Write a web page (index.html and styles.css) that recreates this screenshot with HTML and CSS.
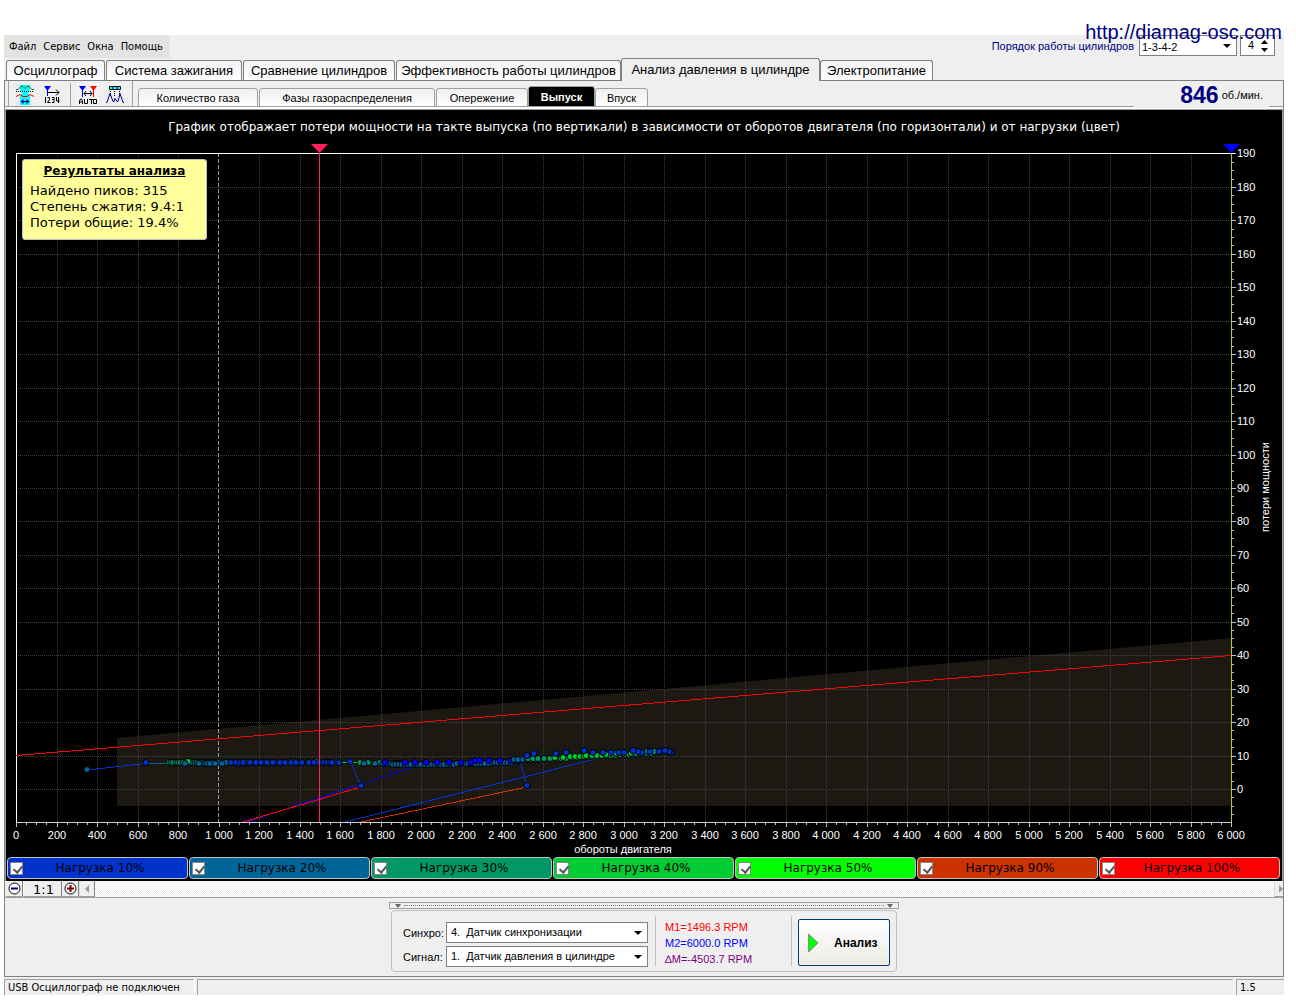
FILE: index.html
```
<!DOCTYPE html>
<html lang="ru">
<head>
<meta charset="utf-8">
<title>USB Осциллограф</title>
<link rel="stylesheet" href="styles.css">
</head>
<body>
<a class="site" href="http://diamag-osc.com">http://diamag-osc.com</a>
<div class="window">
  <header class="top">
    <nav class="menu">
      <button type="button">Файл</button><button type="button">Сервис</button><button type="button">Окна</button><button type="button">Помощь</button>
    </nav>
    <div class="order">
      <label for="order">Порядок работы цилиндров</label>
      <span class="combo combo-order"><select id="order"><option>1-3-4-2</option></select></span>
      <span class="spin"><input type="number" value="4" aria-label="Количество цилиндров"><svg width="9" height="14" viewBox="0 0 9 14"><path d="M1 5L4.500 1L8 5ZM1 9H8L4.500 13Z"/></svg></span>
    </div>
  </header>

  <nav class="tabs">
    <button type="button">Осциллограф</button>
    <button type="button">Система зажигания</button>
    <button type="button">Сравнение цилиндров</button>
    <button type="button">Эффективность работы цилиндров</button>
    <button type="button" class="active">Анализ давления в цилиндре</button>
    <button type="button">Электропитание</button>
  </nav>

  <main class="page">
    <div class="toolbar">
      <div class="tools">
        <button type="button" aria-label="Диапазон">
          <svg width="20" height="20" viewBox="0 0 20 20"><path fill="#0ff" d="M5 0h10v5l-2 3 2 3v9H5v-9l2-3-2-3z"/><path fill="none" stroke="#008000" d="M1 4.500h2l3-3h2l2 2 2-2h2l3 3h2"/><path stroke="#000" stroke-dasharray="1 1" d="M1 6.500h18"/><path fill="none" stroke="#f00" d="M1 11.500l4-2 3 2h4l3-2 4 2"/><path stroke="#000080" d="M6 16.500h8"/><path fill="#000080" d="M5.500 16.500l3-2.500v5zM14.500 16.500l-3-2.500v5z"/></svg>
        </button>
        <button type="button" aria-label="Нумерация">
          <svg width="18" height="20" viewBox="0 0 18 20"><path fill="#00f" d="M1 1h7L4.500 6z"/><path stroke="#00f" d="M4.500 2v9"/><path fill="none" stroke="#000" d="M5 7.500h11M13 4.500l3 3-3 3"/><path fill="none" stroke="#000" d="M2.500 12v6M4.500 12.500h2v2l-2 3h3M9 12.500h2v5H9M9 14.500h2M13.500 12v4h3M15.500 12v6"/></svg>
        </button>
        <i class="sep"></i>
        <button type="button" class="pressed" aria-label="Авто">
          <svg width="20" height="20" viewBox="0 0 20 20"><path fill="#00f" d="M1 1h7L4.500 6z"/><path stroke="#00f" d="M4.500 2v10"/><path fill="#f00" d="M12 1h7l-3.500 5z"/><path stroke="#f00" d="M15.500 2v10"/><path fill="none" stroke="#000" d="M6 8.500h8M8 6l-2 2.500L8 11M12 6l2 2.500-2 2.500M1.500 19v-3l1-2h1l1 2v3M1.500 17h3M6.500 14v4.500h3V14M11 14.500h4M13.500 14v5M15.500 14.500h3v4h-3z"/></svg>
        </button>
        <button type="button" aria-label="Такты">
          <svg width="20" height="20" viewBox="0 0 20 20"><path fill="#0ff" stroke="#000" d="M4.500 1.500h11v3h-11zM8 1v4M12 1v4"/><path stroke="#000" stroke-dasharray="1 1" d="M5.500 6v6M9.500 6v6M14.500 6v6"/><path fill="none" stroke="#000080" d="M1 17.500h1l3-9 3 8h1l1-3 2 3h1l2-8 3 9h1"/></svg>
        </button>
      </div>
      <nav class="subtabs">
        <button type="button">Количество газа</button>
        <button type="button" class="wide">Фазы газораспределения</button>
        <button type="button">Опережение</button>
        <button type="button" class="active">Выпуск</button>
        <button type="button" class="short">Впуск</button>
      </nav>
      <div class="rpm"><b>846</b><span>об./мин.</span></div>
    </div>

    <section class="scope">
      <h1>График отображает потери мощности на такте выпуска (по вертикали) в зависимости от оборотов двигателя (по горизонтали) и от нагрузки (цвет)</h1>
      <div class="plot">
        <svg id="chart" class="chart" viewBox="6 143 1276 713"></svg>
        <aside class="results">
          <h2>Результаты анализа</h2>
          <p>Найдено пиков: 315</p>
          <p>Степень сжатия: 9.4:1</p>
          <p>Потери общие: 19.4%</p>
        </aside>
      </div>
      <div class="legend">
        <label class="l10"><input type="checkbox" checked><span>Нагрузка 10%</span></label>
        <label class="l20"><input type="checkbox" checked><span>Нагрузка 20%</span></label>
        <label class="l30"><input type="checkbox" checked><span>Нагрузка 30%</span></label>
        <label class="l40"><input type="checkbox" checked><span>Нагрузка 40%</span></label>
        <label class="l50"><input type="checkbox" checked><span>Нагрузка 50%</span></label>
        <label class="l90"><input type="checkbox" checked><span>Нагрузка 90%</span></label>
        <label class="l100"><input type="checkbox" checked><span>Нагрузка 100%</span></label>
      </div>
    </section>

    <div class="scroll">
      <button type="button" class="zoom" aria-label="Уменьшить"><svg width="13" height="13" viewBox="0 0 13 13"><circle cx="6.500" cy="6.500" r="5.500" fill="#fff" stroke="#000"/><path stroke="#000080" stroke-width="2" d="M3 6.500h7"/></svg></button>
      <button type="button" class="ratio">1:1</button>
      <button type="button" class="zoom" aria-label="Увеличить"><svg width="13" height="13" viewBox="0 0 13 13"><circle cx="6.500" cy="6.500" r="5.500" fill="#fff" stroke="#000"/><path stroke="#800000" stroke-width="2" d="M3 6.500h7M6.500 3v7"/></svg></button>
      <button type="button" class="arrow" aria-label="Влево"><svg width="4" height="8" viewBox="0 0 4 8"><path fill="#999" d="M4 0v8L0 4z"/></svg></button>
      <div class="track"></div>
      <button type="button" class="arrow end" aria-label="Вправо"><svg width="4" height="8" viewBox="0 0 4 8"><path fill="#999" d="M0 0v8l4-4z"/></svg></button>
    </div>

    <section class="dock">
      <div class="splitter">
        <svg width="6" height="4" viewBox="0 0 6 4"><path fill="#666" d="M0 0h6L3 4z"/></svg><i></i><svg width="6" height="4" viewBox="0 0 6 4"><path fill="#666" d="M0 0h6L3 4z"/></svg>
      </div>
      <form class="controls">
        <div class="fields">
          <label for="sync">Синхро:</label>
          <span class="combo"><select id="sync"><option>4.&nbsp; Датчик синхронизации</option></select></span>
          <label for="signal">Сигнал:</label>
          <span class="combo"><select id="signal"><option>1.&nbsp; Датчик давления в цилиндре</option></select></span>
        </div>
        <div class="markers">
          <p class="m1">M1=1496.3 RPM</p>
          <p class="m2">M2=6000.0 RPM</p>
          <p class="md">∆M=-4503.7 RPM</p>
        </div>
        <button type="button" class="analyze"><svg width="11" height="20" viewBox="0 0 11 20"><path fill="#0f0" stroke="#888" d="M.5 1v18L10 10z"/></svg><span>Анализ</span></button>
      </form>
    </section>
  </main>

  <footer class="status">
    <span class="state">USB Осциллограф не подключен</span><span class="blank"></span><span class="version">1.5</span>
  </footer>
</div>
<script src="chart.js"></script>
</body>
</html>
```
FILE: styles.css
```
* { box-sizing: border-box; }
body {
  margin: 0;
  padding: 35px 12px 4px 4px;
  background: #fff;
  color: #000;
  font: 11px/14px "Liberation Sans", Arial, sans-serif;
}
button, select, input { font: inherit; color: inherit; margin: 0; padding: 0; border: 0; background: none; }
h1, h2, p { margin: 0; }
svg { display: block; flex: none; }
.site {
  position: absolute;
  top: 20px;
  right: 14px;
  z-index: 2;
  color: #000080;
  font-size: 20px;
  line-height: 24px;
  text-decoration: none;
}
.window { background: #efefef; }

.top { display: flex; justify-content: space-between; height: 23px; }
.menu {
  display: flex;
  gap: 7px;
  padding: 0 7px 0 5px;
  background: #e3e3e3;
  font-family: "DejaVu Sans Condensed", "DejaVu Sans", sans-serif;
}
.order { display: flex; padding-right: 9px; color: #000080; line-height: 22px; }
.order label { margin-right: 5px; }
.combo { position: relative; display: block; height: 21px; border: 1px solid #808080; background: #fff; color: #000; }
.combo::after {
  content: "";
  position: absolute;
  top: 8px;
  right: 5px;
  border: 4px solid transparent;
  border-top-color: #000;
  border-bottom: 0;
}
.combo select { display: block; width: 100%; height: 100%; padding-left: 4px; appearance: none; outline: 0; }
.combo-order { width: 98px; margin-right: 3px; }
.combo-order select { padding-left: 2px; padding-bottom: 3px; }
.spin { display: flex; align-items: center; width: 35px; height: 21px; border: 1px solid #808080; background: #fff; color: #000; }
.spin input { width: 19px; padding: 0 0 2px 7px; appearance: textfield; }
.spin input::-webkit-inner-spin-button { display: none; }

.tabs { display: flex; align-items: flex-end; height: 22px; padding-left: 2px; gap: 1px; }
.tabs button {
  width: 113px;
  height: 20px;
  border: 1px solid #808080;
  border-bottom: 0;
  border-radius: 3px 3px 0 0;
  background: linear-gradient(#f2f2f2, #fff);
  font-size: 13px;
  white-space: nowrap;
}
.tabs button:nth-child(1) { width: 99px; }
.tabs button:nth-child(2) { width: 136px; }
.tabs button:nth-child(3) { width: 152px; }
.tabs button:nth-child(4) { width: 225px; }
.tabs .active { position: relative; width: 199px; height: 23px; margin: 0 -1px -1px; background: #efefef; }

.page { border: 1px solid #808080; }
.toolbar { display: flex; height: 29px; padding-left: 3px; border-bottom: 1px solid #a0a0a0; box-shadow: inset 0 -2px #fff, inset 0 -3px #999; }
.tools { display: flex; align-items: center; height: 25px; padding: 2px 6px 0 4px; border-left: 1px solid #a0a0a0; border-right: 1px solid #a0a0a0; gap: 4px; width: 125px; }
.tools button { display: flex; align-items: center; justify-content: center; width: 23px; height: 23px; }
.tools .pressed { background: #fff repeating-conic-gradient(#e8e8e8 0 25%, #fff 0 50%) 0 0 / 2px 2px; }
.sep { width: 1px; height: 23px; margin: 0 1px 0 3px; background: #a0a0a0; }
.subtabs { display: flex; align-items: flex-end; height: 26px; margin-left: 5px; gap: 1px; }
.subtabs button {
  width: 92px;
  height: 19px;
  border: 1px solid #a0a0a0;
  border-radius: 3px 3px 0 0;
  background: linear-gradient(#efefef, #fff);
  white-space: nowrap;
}
.subtabs button:first-child { width: 120px; }
.subtabs .wide { width: 176px; }
.subtabs .short { width: 53px; margin-left: -1px; }
.subtabs .active { width: 67px; height: 21px; margin-left: -1px; background: #000; color: #fff; font-weight: bold; }
.rpm { display: flex; align-items: center; height: 27px; margin-left: auto; margin-right: 14px; padding: 0 6px 0 46px; background: #efefef; gap: 3px; }
.rpm b { color: #000080; font-size: 23px; }

.scope { padding: 1px 0 2px; border: solid #a0a0a0; border-width: 0 1px; background: #000; font-family: "DejaVu Sans", Verdana, sans-serif; }
.scope h1 { height: 32px; padding-top: 8px; color: #fff; font-size: 12px; font-weight: normal; line-height: 16px; text-align: center; }
.plot { position: relative; }
.chart { width: 100%; height: auto; }
.chart text { fill: #fff; font: 11px "Liberation Sans", Arial, sans-serif; }
.results {
  position: absolute;
  top: 16px;
  left: 16px;
  width: 185px;
  height: 81px;
  padding: 3px 7px;
  border: 1px solid #c0c0c0;
  border-radius: 3px;
  background: #ff9;
  font-size: 13px;
  line-height: 16px;
  white-space: nowrap;
}
.results h2 { margin-bottom: 4px; font-size: 12px; line-height: 16px; text-align: center; text-decoration: underline; }
.legend { display: grid; grid-template-columns: repeat(7, 1fr); padding: 1px 2px 0 1px; gap: 1px; }
.legend label {
  display: flex;
  align-items: center;
  height: 22px;
  padding: 0 10px 0 2px;
  border: 1px solid #c0c0c0;
  border-radius: 4px;
  font-size: 12px;
}
.legend span { flex: 1; text-align: center; white-space: nowrap; }
.legend input { position: relative; width: 13px; height: 13px; border: 1px solid #888; background: #fff; appearance: none; }
.legend input:checked::after {
  content: "";
  position: absolute;
  top: 1px;
  left: 4px;
  width: 4px;
  height: 7px;
  border: solid #555;
  border-width: 0 2px 2px 0;
  transform: rotate(40deg);
}
.l10 { background: #0033cc; }
.l20 { background: #006699; }
.l30 { background: #009966; }
.l40 { background: #00cc33; }
.l50 { background: #00ff00; }
.l90 { background: #cc3300; }
.l100 { background: #ff0000; }

.scroll { display: flex; height: 17px; padding-left: 1px; border-bottom: 1px solid #a0a0a0; background: #efefef; }
.scroll button { display: flex; align-items: center; justify-content: center; border-right: 1px solid #808080; border-bottom: 1px solid #a0a0a0; }
.scroll .zoom { width: 17px; }
.scroll .ratio { width: 39px; padding: 2px 0 0 2px; border-left: 1px solid #fff; font: 13px "DejaVu Sans", sans-serif; }
.scroll .arrow { width: 16px; border-left: 1px solid #ddd; }
.scroll .end { width: 9px; padding-left: 4px; border-right: 0; }
.track { flex: 1; background: #fff repeating-conic-gradient(#ececec 0 25%, #fff 0 50%) 0 0 / 2px 2px; }

.dock { display: flex; flex-direction: column; align-items: center; padding: 4px 0; }
.splitter { display: flex; align-items: center; width: 510px; height: 7px; padding: 0 5px; border: 1px solid #a0a0a0; gap: 3px; }
.splitter i { flex: 1; border-top: 1px dotted #808080; }
.controls { display: flex; width: 506px; height: 62px; margin-top: 1px; padding: 8px 5px 5px 11px; border: 1px solid #c0c0c0; border-radius: 4px; }
.fields { display: grid; grid-template-columns: 43px 202px; grid-auto-rows: 21px; row-gap: 3px; align-items: center; padding-top: 3px; }
.combo select { padding-bottom: 1px; }
.markers { width: 137px; height: 50px; margin: -3px 6px 0 7px; padding: 3px 9px 0; border: solid #c0c0c0; border-width: 0 1px; line-height: 16px; white-space: nowrap; }
.m1 { color: #f00; }
.m2 { color: #00f; }
.md { color: #800080; }
.controls .analyze {
  display: flex;
  align-items: center;
  width: 92px;
  height: 47px;
  padding-left: 9px;
  border: 1px solid #003c74;
  border-radius: 2px;
  background: linear-gradient(#fff, #ecebe5);
  font-weight: bold;
  font-size: 12px;
  gap: 15px;
}

.status { display: flex; height: 18px; padding-top: 2px; font-family: "DejaVu Sans Condensed", "DejaVu Sans", sans-serif; gap: 3px; }
.status span { padding: 1px 3px; border: solid #a0a0a0; border-width: 1px 0 0 1px; box-shadow: 1px 0 #fff; white-space: nowrap; }
.state { width: 190px; }
.blank { flex: 1; }
.version { width: 48px; }
```
FILE: chart.js
```
const X0 = 16, X1 = 1231, YT = 153, YB = 822, Y_ZERO = 789;
const px = rpm => Math.round(X0 + rpm * 0.2025);
const py = loss => Math.round(Y_ZERO - loss * 3.345);
const load = { b: '#0033cc', t: '#006699', g: '#009966', G: '#00cc33', B: '#0000ff' };
const out = [];
const line = (x1, y1, x2, y2, color, extra = '') =>
  out.push(`<path d="M${x1} ${y1}L${x2} ${y2}" fill="none" stroke="${color}" shape-rendering="crispEdges" ${extra}/>`);

// Tolerance zone
out.push('<path fill="#1c1913" d="M117 738L1231 638V806H117Z"/>');

// Grid, horizontal axis
for (let r = 0; r <= 6000; r += 50) {
  const x = px(r) + 0.5, major = r % 200 === 0;
  if (major && r > 0 && r < 6000 && r !== 1000) line(x, YT, x, YB, '#404040', 'stroke-dasharray="1 1"');
  line(x, YB, x, YB + (major ? 5 : 3), '#c0c0c0');
  if (major) {
    const label = r < 1000 ? String(r) : Math.floor(r / 1000) + ' ' + String(r % 1000).padStart(3, '0');
    out.push(`<text x="${px(r)}" y="839" text-anchor="middle">${label}</text>`);
  }
}
// Grid, vertical axis
for (let v = -7.5; v <= 190; v += 2.5) {
  const y = py(v) + 0.5, major = v % 10 === 0;
  if (major && v < 190) line(X0, y, X1, y, '#404040', 'stroke-dasharray="1 1"');
  line(X1, y, X1 + (major ? 5 : 3), y, '#c0c0c0');
  if (major) out.push(`<text x="1237" y="${py(v) + 4}">${v}</text>`);
}
line(218.5, YT, 218.5, YB, '#999', 'stroke-dasharray="4 2"');

// Frame
line(X0 + 0.5, YT, X0 + 0.5, YB, '#fff');
line(X0, YT + 0.5, X1 + 4, YT + 0.5, '#fff');
line(X0, YB + 0.5, X1, YB + 0.5, '#d0d0d0');
line(X1 + 0.5, YT, X1 + 0.5, YB, '#c0c040');

// Limit and trend lines
line(16, 755.5, 1231, 655.5, '#f00');
line(87, 770, 146, 763.5, load.b);
line(146, 763.5, 230, 763.5, load.t);
line(168, 762.5, 390, 762.5, load.G);
line(350, 761, 361, 786, load.b);
line(247, 822, 361, 784, load.B);
line(361, 784, 425, 763, load.B, 'stroke-dasharray="5 2"');
line(243, 822, 361, 787, '#f00');
line(345, 822, 623, 752, load.b);
line(361, 822, 527, 787, '#cc3300');
line(520, 760, 527, 786, load.b);

// Measured peaks: load key, y, then x positions
const peaks = [
  ['g', 762, [169, 171, 173, 176, 178, 180, 183, 186, 191, 194, 200, 230, 240, 258, 270]],
  ['t', 762, [190, 197, 203, 206, 209, 213, 216, 219, 223, 226, 234, 247, 252, 264, 274, 284, 297, 308]],
  ['G', 761, [188, 291, 317]],
  ['t', 763, [185, 199, 205, 207, 210, 215, 222, 238, 244, 268]],
  ['b', 762, [231, 236, 240, 243, 250, 256, 261, 267, 273, 280, 285, 291, 296, 302, 309, 314, 319, 324, 327, 330, 332, 339]],
  ['b', 761, [350]],
  ['g', 762, [360, 368, 380]],
  ['t', 763, [364, 375, 383, 387, 391, 394, 397, 400]],
  ['t', 764, [393, 396, 399, 402, 405, 408, 411, 415, 418, 421, 425, 428, 432, 435, 438, 441, 444, 448, 451, 454]],
  ['t', 763, [457, 461, 465, 468, 471, 475, 479, 482, 485, 489]],
  ['t', 762, [492, 495, 498, 501, 505, 508, 511]],
  ['B', 762, [385, 405, 415, 426, 437, 449, 461, 471]],
  ['B', 760, [475, 480, 489, 500, 511, 519]],
  ['t', 759, [514, 518, 523, 527, 531, 536, 540]],
  ['g', 758, [528, 533, 538, 544, 550, 556, 561, 566]],
  ['G', 757, [555, 563, 571, 576]],
  ['G', 756, [570, 575, 580, 584, 587, 592]],
  ['G', 755, [586, 592, 597, 602, 606, 611, 615]],
  ['G', 754, [606, 613, 620, 625, 629]],
  ['g', 753, [616, 623, 631, 636, 641, 646, 651]],
  ['g', 751, [647, 654, 660, 668]],
  ['b', 755, [527]],
  ['b', 753, [534, 556]],
  ['b', 752, [566, 593, 603, 611, 619, 624, 642, 671]],
  ['b', 751, [638, 650, 659, 669]],
  ['b', 750, [584, 633, 665]],
  ['b', 762, [146]],
  ['t', 769, [87]],
  ['b', 785, [361, 527]]
];
for (const [key, y, xs] of peaks)
  for (const x of xs)
    out.push(`<circle cx="${x}" cy="${y + 0.5}" r="3" fill="${load[key]}" stroke="#000"/>`);

// Cursors
line(319.5, YT, 319.5, YB, '#ff1f5a');
out.push('<path fill="#ff1f5a" d="M311 144h17l-8.500 9z"/>');
out.push('<path fill="#00f" d="M1223 144h17l-8.500 9z"/>');

// Axis titles
out.push('<text x="623" y="853" text-anchor="middle">обороты двигателя</text>');
out.push('<text transform="translate(1269 487) rotate(-90)" text-anchor="middle">потери мощности</text>');

document.getElementById('chart').innerHTML = out.join('');
```
